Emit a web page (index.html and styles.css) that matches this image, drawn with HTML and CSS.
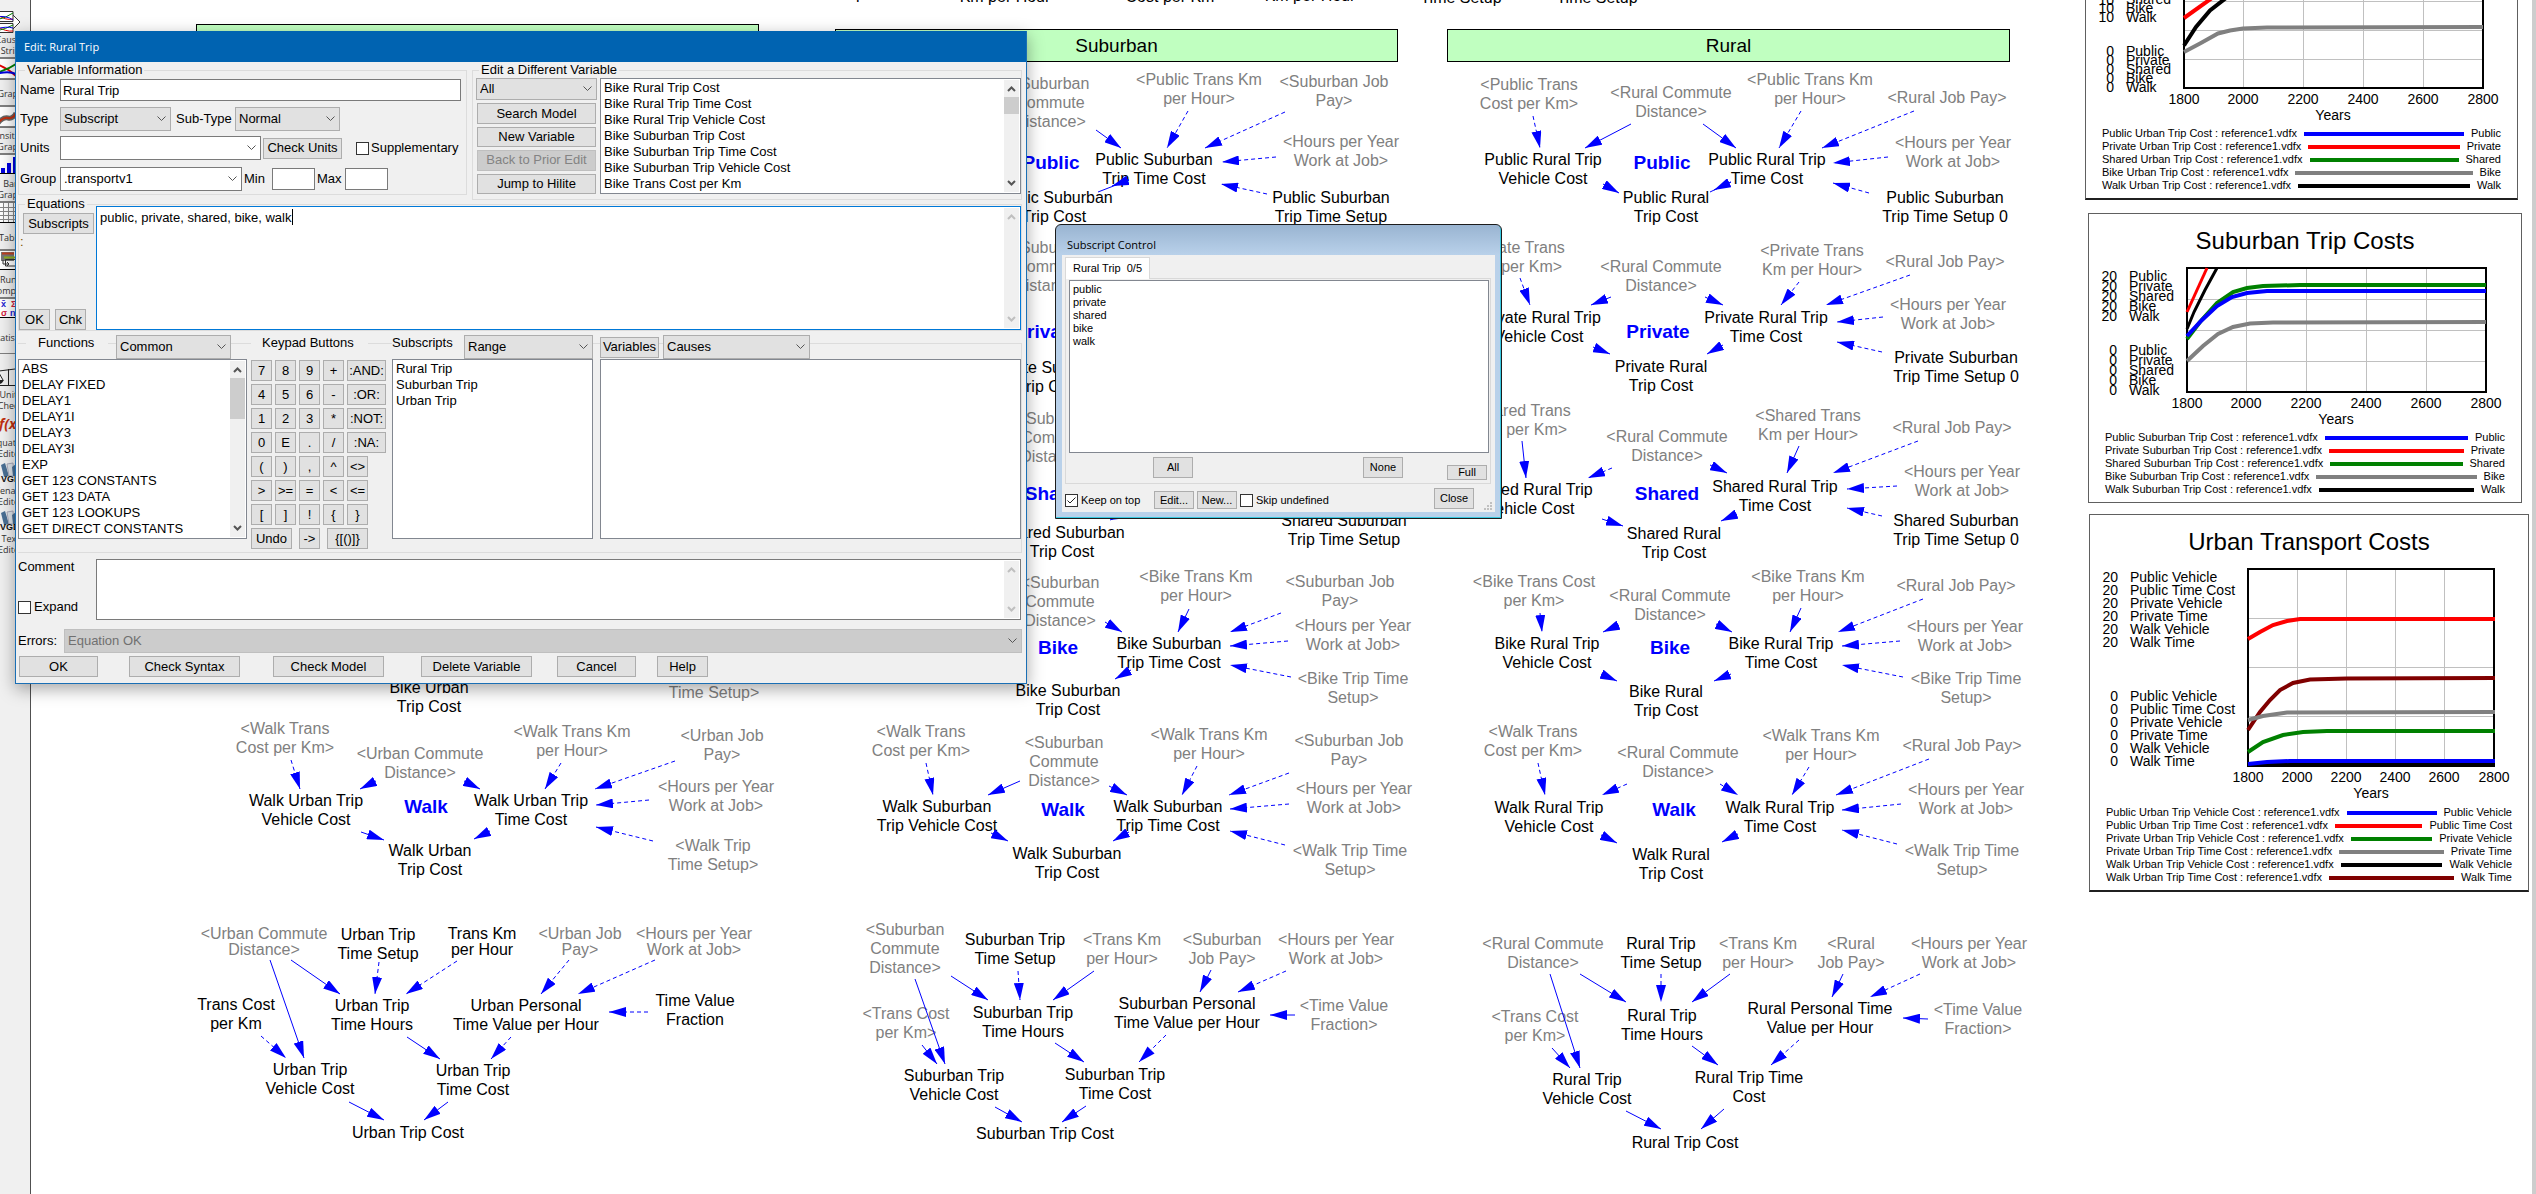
FILE: index.html
```html
<!DOCTYPE html>
<html lang="en">
<head>
<meta charset="utf-8">
<title>Transport model</title>
<link rel="stylesheet" href="styles.css">
</head>
<body>
<div class="workspace">

<nav class="toolbar" aria-label="Analysis tools">
  <button class="tool"><svg viewBox="-9 0 40 22"><path d="M-9 .5H13V10.5H-9M-9 12.5H13V21.5H-9M13 4L20 11L13 18" fill="#fff" stroke="#333"/><path d="M-4 3Q6 10 13 8M-4 15Q6 21 13 20" stroke="#e00000"/><path d="M-4 9Q6 7 13 2M-4 20Q6 18 13 14" stroke="#008000"/><path d="M-4 6Q6 4 13 9M-4 18Q6 15 13 17" stroke="#0000e0"/></svg><span>Causes<br>Strip</span></button>
  <button class="tool"><svg viewBox="-9 0 40 22"><path class="tile" d="M-9 0H31V20H-9z"/><path d="M-9 4Q4 6 16 17" stroke="#e00000" stroke-width="2"/><path d="M-9 15Q6 12 16 5" stroke="#008000" stroke-width="2"/><path d="M-9 16Q8 11 16 15" stroke="#0000e0" stroke-width="2"/><path d="M-9 20H31" stroke="#000"/></svg><span>Graph</span></button>
  <button class="tool"><svg viewBox="-9 0 40 22"><path class="tile" d="M-9 0H31V20H-9z"/><path d="M-2 16Q3 10 8 11T16 6" stroke="#666" stroke-width="5"/><path d="M-2 16Q3 10 8 11T16 6" stroke="#c03010" stroke-width="2"/><path d="M-9 20H31" stroke="#000"/></svg><span>Sensitivity<br>Graph</span></button>
  <button class="tool"><svg viewBox="-9 0 40 22"><path class="tile" d="M-9 0H31V18H-9z"/><path d="M1 13H5V18H1zM7 8H11V18H7zM13 2H17V18H13z" fill="#0000e0"/><path d="M-9 18.500H31" stroke="#000"/></svg><span>Bar<br>Graph</span></button>
  <button class="tool"><svg viewBox="-9 0 40 22"><path class="tile" d="M-9 0H31V19H-9z"/><path d="M-9 4.500H31M-9 8.500H31M-9 12.500H31M-9 16.500H31M3.500 0V19M8.500 0V19M13.500 0V19" stroke="#888"/><path d="M-9 19.500H31" stroke="#000"/></svg><span>Table</span></button>
  <button class="tool"><svg viewBox="-9 0 40 22"><path class="tile" d="M-9 0H31V18H-9z"/><path d="M1 1H14V10H1z" fill="#777"/><path d="M2 2.500H14" stroke="#c04020" stroke-width="2"/><path d="M4 6.500H16" stroke="#90b020" stroke-width="2"/><path d="M5.500 8.500H16V15H5.500zM3 9V13H9M7 11L9 13L7 15" stroke="#333"/><path d="M-9 18.500H31" stroke="#000"/></svg><span>Runs<br>Compare</span></button>
  <button class="tool tool-last"><svg viewBox="-9 0 40 22"><path class="tile" d="M-9 0H31V18H-9z"/><text x="1" y="8" fill="#2020d0">x̄</text><text x="11" y="8" fill="#d02040">Σ</text><text x="1" y="17" fill="#d02040">σ</text><text x="10" y="17" fill="#2020d0">n</text><path d="M-9 18.500H31" stroke="#000"/></svg><span>Statistics</span></button>
  <button class="tool tool-plain"><svg viewBox="-9 0 40 22"><path d="M-9 6L15 3M8.500 3V19M-3 7L-6 14M-1 7L3 14M-7 19.500H16" stroke="#222"/><path d="M-6 14H4Q2 18-1 18T-6 14" fill="#222"/></svg><span>Units<br>Check</span></button>
  <button class="tool tool-plain"><svg viewBox="-9 0 40 22"><text class="fx" x="-1" y="15">f(x)</text></svg><span>Equation<br>Editor</span></button>
  <button class="tool tool-plain"><svg viewBox="-9 0 40 22"><path d="M1 3L5 1L9 14L4 15z" fill="#4a6f94"/><path d="M7 2L13 1L14 14L9 14z" fill="#dde4ea" stroke="#aab"/><path d="M12 5L16 2V14H13z" fill="#4a6f94"/><text x="1" y="20" fill="#111">VGD</text></svg><span>Venapp<br>Editor</span></button>
  <button class="tool tool-plain"><svg viewBox="-9 0 40 22"><path d="M1 3L5 1L9 14L4 15z" fill="#4a6f94"/><path d="M7 2L13 1L14 14L9 14z" fill="#dde4ea" stroke="#aab"/><path d="M12 5L16 2V14H13z" fill="#4a6f94"/><text x="0" y="20" fill="#111">VGD</text></svg><span>Text<br>Editor</span></button>
</nav>

<main class="sketch">
<div class="banner" style="left:196px;top:24px"></div>
<div class="banner" style="left:835px;top:29px">Suburban</div>
<div class="banner" style="left:1447px;top:29px">Rural</div>

<!-- Shared inputs above the banners -->
<p class="node" style="left:863px;top:-16px">Cost per Km</p>
<p class="node" style="left:1005px;top:-13px">Km per Hour</p>
<p class="node" style="left:1170px;top:-13px">Cost per Km</p>
<p class="node" style="left:1310px;top:-14px">Km per Hour</p>
<p class="node" style="left:1461px;top:-12px">Time Setup</p>
<p class="node" style="left:1597px;top:-12px">Time Setup</p>

<!-- Urban -->
<p class="node" style="left:429px;top:678px">Bike Urban<br>Trip Cost</p>
<p class="node shadow" style="left:714px;top:683px">Time Setup&gt;</p>
<p class="node shadow" style="left:285px;top:719px">&lt;Walk Trans<br>Cost per Km&gt;</p>
<p class="node shadow" style="left:420px;top:744px">&lt;Urban Commute<br>Distance&gt;</p>
<p class="node shadow" style="left:572px;top:722px">&lt;Walk Trans Km<br>per Hour&gt;</p>
<p class="node shadow" style="left:722px;top:726px">&lt;Urban Job<br>Pay&gt;</p>
<p class="node shadow" style="left:716px;top:777px">&lt;Hours per Year<br>Work at Job&gt;</p>
<p class="node" style="left:306px;top:791px">Walk Urban Trip<br>Vehicle Cost</p>
<p class="node mode" style="left:426px;top:796px">Walk</p>
<p class="node" style="left:531px;top:791px">Walk Urban Trip<br>Time Cost</p>
<p class="node" style="left:430px;top:841px">Walk Urban<br>Trip Cost</p>
<p class="node shadow" style="left:713px;top:836px">&lt;Walk Trip<br>Time Setup&gt;</p>
<p class="node shadow tight" style="left:264px;top:926px">&lt;Urban Commute<br>Distance&gt;</p>
<p class="node" style="left:378px;top:925px">Urban Trip<br>Time Setup</p>
<p class="node tight" style="left:482px;top:926px">Trans Km<br>per Hour</p>
<p class="node shadow tight" style="left:580px;top:926px">&lt;Urban Job<br>Pay&gt;</p>
<p class="node shadow tight" style="left:694px;top:926px">&lt;Hours per Year<br>Work at Job&gt;</p>
<p class="node" style="left:236px;top:995px">Trans Cost<br>per Km</p>
<p class="node" style="left:372px;top:996px">Urban Trip<br>Time Hours</p>
<p class="node" style="left:526px;top:996px">Urban Personal<br>Time Value per Hour</p>
<p class="node" style="left:695px;top:991px">Time Value<br>Fraction</p>
<p class="node" style="left:310px;top:1060px">Urban Trip<br>Vehicle Cost</p>
<p class="node" style="left:473px;top:1061px">Urban Trip<br>Time Cost</p>
<p class="node" style="left:408px;top:1123px">Urban Trip Cost</p>

<!-- Suburban -->
<p class="node shadow" style="left:1050px;top:74px">&lt;Suburban<br>Commute<br>Distance&gt;</p>
<p class="node shadow" style="left:1199px;top:70px">&lt;Public Trans Km<br>per Hour&gt;</p>
<p class="node shadow" style="left:1334px;top:72px">&lt;Suburban Job<br>Pay&gt;</p>
<p class="node mode" style="left:1051px;top:152px">Public</p>
<p class="node" style="left:1154px;top:150px">Public Suburban<br>Trip Time Cost</p>
<p class="node shadow" style="left:1341px;top:132px">&lt;Hours per Year<br>Work at Job&gt;</p>
<p class="node" style="left:1054px;top:188px">Public Suburban<br>Trip Cost</p>
<p class="node" style="left:1331px;top:188px">Public Suburban<br>Trip Time Setup</p>
<p class="node shadow" style="left:1050px;top:238px">&lt;Suburban<br>Commute<br>Distance&gt;</p>
<p class="node mode" style="left:1046px;top:321px">Private</p>
<p class="node" style="left:1049px;top:358px">Private Suburban<br>Trip Cost</p>
<p class="node shadow" style="left:1056px;top:409px">&lt;Suburban<br>Commute<br>Distance&gt;</p>
<p class="node mode" style="left:1057px;top:483px">Shared</p>
<p class="node" style="left:1062px;top:523px">Shared Suburban<br>Trip Cost</p>
<p class="node" style="left:1344px;top:511px">Shared Suburban<br>Trip Time Setup</p>
<p class="node shadow" style="left:1060px;top:573px">&lt;Suburban<br>Commute<br>Distance&gt;</p>
<p class="node shadow" style="left:1196px;top:567px">&lt;Bike Trans Km<br>per Hour&gt;</p>
<p class="node shadow" style="left:1340px;top:572px">&lt;Suburban Job<br>Pay&gt;</p>
<p class="node shadow" style="left:1353px;top:616px">&lt;Hours per Year<br>Work at Job&gt;</p>
<p class="node mode" style="left:1058px;top:637px">Bike</p>
<p class="node" style="left:1169px;top:634px">Bike Suburban<br>Trip Time Cost</p>
<p class="node" style="left:1068px;top:681px">Bike Suburban<br>Trip Cost</p>
<p class="node shadow" style="left:1353px;top:669px">&lt;Bike Trip Time<br>Setup&gt;</p>
<p class="node shadow" style="left:921px;top:722px">&lt;Walk Trans<br>Cost per Km&gt;</p>
<p class="node shadow" style="left:1064px;top:733px">&lt;Suburban<br>Commute<br>Distance&gt;</p>
<p class="node shadow" style="left:1209px;top:725px">&lt;Walk Trans Km<br>per Hour&gt;</p>
<p class="node shadow" style="left:1349px;top:731px">&lt;Suburban Job<br>Pay&gt;</p>
<p class="node shadow" style="left:1354px;top:779px">&lt;Hours per Year<br>Work at Job&gt;</p>
<p class="node" style="left:937px;top:797px">Walk Suburban<br>Trip Vehicle Cost</p>
<p class="node mode" style="left:1063px;top:799px">Walk</p>
<p class="node" style="left:1168px;top:797px">Walk Suburban<br>Trip Time Cost</p>
<p class="node" style="left:1067px;top:844px">Walk Suburban<br>Trip Cost</p>
<p class="node shadow" style="left:1350px;top:841px">&lt;Walk Trip Time<br>Setup&gt;</p>
<p class="node shadow" style="left:905px;top:920px">&lt;Suburban<br>Commute<br>Distance&gt;</p>
<p class="node" style="left:1015px;top:930px">Suburban Trip<br>Time Setup</p>
<p class="node shadow" style="left:1122px;top:930px">&lt;Trans Km<br>per Hour&gt;</p>
<p class="node shadow" style="left:1222px;top:930px">&lt;Suburban<br>Job Pay&gt;</p>
<p class="node shadow" style="left:1336px;top:930px">&lt;Hours per Year<br>Work at Job&gt;</p>
<p class="node shadow" style="left:906px;top:1004px">&lt;Trans Cost<br>per Km&gt;</p>
<p class="node" style="left:1023px;top:1003px">Suburban Trip<br>Time Hours</p>
<p class="node" style="left:1187px;top:994px">Suburban Personal<br>Time Value per Hour</p>
<p class="node shadow" style="left:1344px;top:996px">&lt;Time Value<br>Fraction&gt;</p>
<p class="node" style="left:954px;top:1066px">Suburban Trip<br>Vehicle Cost</p>
<p class="node" style="left:1115px;top:1065px">Suburban Trip<br>Time Cost</p>
<p class="node" style="left:1045px;top:1124px">Suburban Trip Cost</p>

<!-- Rural -->
<p class="node shadow" style="left:1529px;top:75px">&lt;Public Trans<br>Cost per Km&gt;</p>
<p class="node shadow" style="left:1671px;top:83px">&lt;Rural Commute<br>Distance&gt;</p>
<p class="node shadow" style="left:1810px;top:70px">&lt;Public Trans Km<br>per Hour&gt;</p>
<p class="node shadow" style="left:1947px;top:88px">&lt;Rural Job Pay&gt;</p>
<p class="node shadow" style="left:1953px;top:133px">&lt;Hours per Year<br>Work at Job&gt;</p>
<p class="node" style="left:1543px;top:150px">Public Rural Trip<br>Vehicle Cost</p>
<p class="node mode" style="left:1662px;top:152px">Public</p>
<p class="node" style="left:1767px;top:150px">Public Rural Trip<br>Time Cost</p>
<p class="node" style="left:1666px;top:188px">Public Rural<br>Trip Cost</p>
<p class="node" style="left:1945px;top:188px">Public Suburban<br>Trip Time Setup 0</p>
<p class="node shadow" style="left:1513px;top:238px">&lt;Private Trans<br>Cost per Km&gt;</p>
<p class="node shadow" style="left:1661px;top:257px">&lt;Rural Commute<br>Distance&gt;</p>
<p class="node shadow" style="left:1812px;top:241px">&lt;Private Trans<br>Km per Hour&gt;</p>
<p class="node shadow" style="left:1945px;top:252px">&lt;Rural Job Pay&gt;</p>
<p class="node shadow" style="left:1948px;top:295px">&lt;Hours per Year<br>Work at Job&gt;</p>
<p class="node" style="left:1539px;top:308px">Private Rural Trip<br>Vehicle Cost</p>
<p class="node mode" style="left:1658px;top:321px">Private</p>
<p class="node" style="left:1766px;top:308px">Private Rural Trip<br>Time Cost</p>
<p class="node" style="left:1661px;top:357px">Private Rural<br>Trip Cost</p>
<p class="node" style="left:1956px;top:348px">Private Suburban<br>Trip Time Setup 0</p>
<p class="node shadow" style="left:1518px;top:401px">&lt;Shared Trans<br>Cost per Km&gt;</p>
<p class="node shadow" style="left:1667px;top:427px">&lt;Rural Commute<br>Distance&gt;</p>
<p class="node shadow" style="left:1808px;top:406px">&lt;Shared Trans<br>Km per Hour&gt;</p>
<p class="node shadow" style="left:1952px;top:418px">&lt;Rural Job Pay&gt;</p>
<p class="node shadow" style="left:1962px;top:462px">&lt;Hours per Year<br>Work at Job&gt;</p>
<p class="node" style="left:1530px;top:480px">Shared Rural Trip<br>Vehicle Cost</p>
<p class="node mode" style="left:1667px;top:483px">Shared</p>
<p class="node" style="left:1775px;top:477px">Shared Rural Trip<br>Time Cost</p>
<p class="node" style="left:1674px;top:524px">Shared Rural<br>Trip Cost</p>
<p class="node" style="left:1956px;top:511px">Shared Suburban<br>Trip Time Setup 0</p>
<p class="node shadow" style="left:1534px;top:572px">&lt;Bike Trans Cost<br>per Km&gt;</p>
<p class="node shadow" style="left:1670px;top:586px">&lt;Rural Commute<br>Distance&gt;</p>
<p class="node shadow" style="left:1808px;top:567px">&lt;Bike Trans Km<br>per Hour&gt;</p>
<p class="node shadow" style="left:1956px;top:576px">&lt;Rural Job Pay&gt;</p>
<p class="node shadow" style="left:1965px;top:617px">&lt;Hours per Year<br>Work at Job&gt;</p>
<p class="node" style="left:1547px;top:634px">Bike Rural Trip<br>Vehicle Cost</p>
<p class="node mode" style="left:1670px;top:637px">Bike</p>
<p class="node" style="left:1781px;top:634px">Bike Rural Trip<br>Time Cost</p>
<p class="node" style="left:1666px;top:682px">Bike Rural<br>Trip Cost</p>
<p class="node shadow" style="left:1966px;top:669px">&lt;Bike Trip Time<br>Setup&gt;</p>
<p class="node shadow" style="left:1533px;top:722px">&lt;Walk Trans<br>Cost per Km&gt;</p>
<p class="node shadow" style="left:1678px;top:743px">&lt;Rural Commute<br>Distance&gt;</p>
<p class="node shadow" style="left:1821px;top:726px">&lt;Walk Trans Km<br>per Hour&gt;</p>
<p class="node shadow" style="left:1962px;top:736px">&lt;Rural Job Pay&gt;</p>
<p class="node shadow" style="left:1966px;top:780px">&lt;Hours per Year<br>Work at Job&gt;</p>
<p class="node" style="left:1549px;top:798px">Walk Rural Trip<br>Vehicle Cost</p>
<p class="node mode" style="left:1674px;top:799px">Walk</p>
<p class="node" style="left:1780px;top:798px">Walk Rural Trip<br>Time Cost</p>
<p class="node" style="left:1671px;top:845px">Walk Rural<br>Trip Cost</p>
<p class="node shadow" style="left:1962px;top:841px">&lt;Walk Trip Time<br>Setup&gt;</p>
<p class="node shadow" style="left:1543px;top:934px">&lt;Rural Commute<br>Distance&gt;</p>
<p class="node" style="left:1661px;top:934px">Rural Trip<br>Time Setup</p>
<p class="node shadow" style="left:1758px;top:934px">&lt;Trans Km<br>per Hour&gt;</p>
<p class="node shadow" style="left:1851px;top:934px">&lt;Rural<br>Job Pay&gt;</p>
<p class="node shadow" style="left:1969px;top:934px">&lt;Hours per Year<br>Work at Job&gt;</p>
<p class="node shadow" style="left:1535px;top:1007px">&lt;Trans Cost<br>per Km&gt;</p>
<p class="node" style="left:1662px;top:1006px">Rural Trip<br>Time Hours</p>
<p class="node" style="left:1820px;top:999px">Rural Personal Time<br>Value per Hour</p>
<p class="node shadow" style="left:1978px;top:1000px">&lt;Time Value<br>Fraction&gt;</p>
<p class="node" style="left:1587px;top:1070px">Rural Trip<br>Vehicle Cost</p>
<p class="node" style="left:1749px;top:1068px">Rural Trip Time<br>Cost</p>
<p class="node" style="left:1685px;top:1133px">Rural Trip Cost</p>

<svg class="arrows" aria-hidden="true">
  <defs><marker id="head" markerUnits="userSpaceOnUse" markerWidth="18" markerHeight="10" refX="17" refY="5" orient="auto"><path d="M0 0L17 5L0 10z"/></marker></defs>
  <!-- solid links -->
  <g class="links">
    <path d="M376 781L360 789"/><path d="M464 781L480 789"/><path d="M361 832L384 840"/><path d="M490 831L474 839"/>
    <path d="M270 960L304 1058"/><path d="M291 960L340 994"/><path d="M407 1037L440 1059"/><path d="M349 1102L384 1120"/><path d="M448 1102L424 1120"/>
    <path d="M1096 130L1121 148"/><path d="M1129 180L1112 186"/><path class="bare" d="M1129 180L1098 192"/><path d="M1129 512L1110 520"/>
    <path d="M1105 622L1122 632"/><path d="M1189 609L1178 632"/><path d="M1131 670L1115 679"/>
    <path d="M1020 781L988 795"/><path d="M1109 786L1127 795"/><path d="M991 833L1008 841"/><path d="M1129 832L1113 841"/>
    <path d="M915 979L945 1064"/><path d="M951 976L988 1000"/><path d="M1094 971L1053 1000"/><path d="M1211 970L1200 992"/><path d="M1295 1015L1270 1015"/><path d="M922 1045L937 1064"/><path d="M1055 1043L1084 1062"/><path d="M995 1107L1022 1122"/><path d="M1086 1106L1062 1122"/>
    <path d="M1631 124L1585 148"/><path d="M1703 124L1736 148"/><path d="M1603 184L1619 193"/><path d="M1731 182L1714 190"/><path class="bare" d="M1731 182L1710 192"/>
    <path d="M1611 297L1591 305"/><path d="M1705 297L1723 305"/><path d="M1593 347L1610 354"/><path d="M1723 345L1707 354"/>
    <path d="M1522 441L1526 478"/><path d="M1710 465L1727 473"/><path d="M1799 446L1787 473"/><path d="M1602 519L1623 526"/><path d="M1737 514L1721 521"/>
    <path d="M1619 625L1603 632"/><path d="M1716 624L1732 632"/><path d="M1801 608L1790 632"/><path d="M1601 674L1617 681"/><path d="M1731 674L1714 681"/>
    <path d="M1601 835L1617 843"/><path d="M1738 834L1722 842"/>
    <path d="M1550 974L1580 1068"/><path d="M1580 974L1626 1002"/><path d="M1730 974L1692 1002"/><path d="M1843 974L1832 997"/><path d="M1928 1019L1903 1018"/><path d="M1552 1048L1570 1068"/><path d="M1692 1046L1718 1065"/><path d="M1626 1111L1661 1129"/><path d="M1724 1109L1701 1129"/>
  </g>
  <!-- dashed links -->
  <g class="links dashed">
    <path d="M291 760L300 789"/><path d="M561 763L545 789"/><path d="M675 761L595 789"/><path d="M649 800L596 805"/><path d="M653 841L596 827"/>
    <path d="M379 962L375 994"/><path d="M457 961L406 994"/><path d="M569 960L541 994"/><path d="M655 960L578 994"/><path d="M648 1012L609 1012"/><path d="M261 1036L286 1058"/><path d="M511 1037L491 1059"/>
    <path d="M1188 111L1167 148"/><path d="M1285 112L1205 148"/><path d="M1276 157L1222 162"/><path d="M1267 194L1221 184"/>
    <path d="M1281 613L1230 632"/><path d="M1288 641L1230 646"/><path d="M1291 677L1230 665"/>
    <path d="M926 763L933 795"/><path d="M1197 766L1182 795"/><path d="M1289 773L1229 795"/><path d="M1289 804L1230 809"/><path d="M1285 845L1230 831"/>
    <path d="M1018 971L1020 1000"/><path d="M1286 971L1238 992"/><path d="M1166 1035L1139 1062"/>
    <path d="M1533 116L1540 148"/><path d="M1801 111L1779 148"/><path d="M1914 111L1822 148"/><path d="M1888 157L1833 163"/><path d="M1869 193L1833 183"/>
    <path d="M1520 278L1530 305"/><path d="M1799 282L1781 305"/><path d="M1910 275L1826 305"/><path d="M1883 317L1837 322"/><path d="M1882 352L1837 342"/>
    <path d="M1612 468L1588 478"/><path d="M1918 441L1833 473"/><path d="M1897 486L1847 489"/><path d="M1882 516L1847 508"/>
    <path d="M1540 613L1542 632"/><path d="M1923 599L1838 632"/><path d="M1900 641L1842 646"/><path d="M1903 677L1842 665"/>
    <path d="M1538 763L1545 795"/><path d="M1627 784L1602 795"/><path d="M1720 784L1738 795"/><path d="M1809 767L1792 795"/><path d="M1929 759L1836 795"/><path d="M1901 804L1842 810"/><path d="M1897 844L1842 830"/>
    <path d="M1661 974L1661 1002"/><path d="M1920 974L1870 997"/><path d="M1799 1040L1771 1065"/>
  </g>
</svg>

<figure class="chart chart-urban">
  <svg viewBox="2086 0 431 127" role="img" aria-label="Urban trip costs">
    <path class="grid" d="M2184 1.500H2483M2184 30.500H2483M2184 59.500H2483M2243.500 0V88M2303.500 0V88M2363.500 0V88M2423.500 0V88"/>
    <path class="frame" d="M2184 -9V88H2483V-9"/>
    <path class="gray" d="M2184 52L2200 43.500L2218 33.500L2230 30.500L2243 28.500L2267 27.500L2483 27"/>
    <path class="black" d="M2184 45.500L2196 27L2210 10.500L2226 -2"/>
    <path class="red" d="M2184 18L2212 -2"/>
    <g class="num"><text x="2114" y="5">10</text><text x="2114" y="13">10</text><text x="2114" y="22">10</text><text x="2114" y="56">0</text><text x="2114" y="65">0</text><text x="2114" y="74">0</text><text x="2114" y="83">0</text><text x="2114" y="92">0</text></g>
    <g><text x="2126" y="4">Shared</text><text x="2126" y="13">Bike</text><text x="2126" y="22">Walk</text><text x="2126" y="56">Public</text><text x="2126" y="65">Private</text><text x="2126" y="74">Shared</text><text x="2126" y="83">Bike</text><text x="2126" y="92">Walk</text></g>
    <g class="axis"><text x="2184" y="104">1800</text><text x="2243" y="104">2000</text><text x="2303" y="104">2200</text><text x="2363" y="104">2400</text><text x="2423" y="104">2600</text><text x="2483" y="104">2800</text><text x="2333" y="120">Years</text></g>
  </svg>
  <ul class="legend">
    <li><span>Public Urban Trip Cost : reference1.vdfx</span><i class="bg-blue"></i><span>Public</span></li>
    <li><span>Private Urban Trip Cost : reference1.vdfx</span><i class="bg-red"></i><span>Private</span></li>
    <li><span>Shared Urban Trip Cost : reference1.vdfx</span><i class="bg-green"></i><span>Shared</span></li>
    <li><span>Bike Urban Trip Cost : reference1.vdfx</span><i class="bg-gray"></i><span>Bike</span></li>
    <li><span>Walk Urban Trip Cost : reference1.vdfx</span><i class="bg-black"></i><span>Walk</span></li>
  </ul>
</figure>

<figure class="chart chart-suburban">
  <figcaption>Suburban Trip Costs</figcaption>
  <svg viewBox="2089 258 432 173" role="img" aria-label="Suburban trip costs">
    <path class="grid" d="M2187 299.500H2486M2187 330.500H2486M2187 361.500H2486M2246.500 268V392M2306.500 268V392M2366.500 268V392M2426.500 268V392"/>
    <path class="frame" d="M2187 268H2486V392H2187z"/>
    <path class="gray" d="M2187 361L2203 346L2218 334L2233 327L2250 323.500L2273 322.500L2486 322"/>
    <path class="black thin" d="M2187 329L2194 312L2205 290L2217 268"/>
    <path class="green" d="M2187 339L2200 322L2217 303L2233 292L2247 288L2263 286L2300 285L2486 285"/>
    <path class="blue" d="M2187 336L2202 320L2217 306L2232 297L2247 293L2267 291L2486 291"/>
    <path class="red thin" d="M2187 312L2207 268"/>
    <g class="num"><text x="2117" y="281">20</text><text x="2117" y="291">20</text><text x="2117" y="301">20</text><text x="2117" y="311">20</text><text x="2117" y="321">20</text><text x="2117" y="355">0</text><text x="2117" y="365">0</text><text x="2117" y="375">0</text><text x="2117" y="385">0</text><text x="2117" y="395">0</text></g>
    <g><text x="2129" y="281">Public</text><text x="2129" y="291">Private</text><text x="2129" y="301">Shared</text><text x="2129" y="311">Bike</text><text x="2129" y="321">Walk</text><text x="2129" y="355">Public</text><text x="2129" y="365">Private</text><text x="2129" y="375">Shared</text><text x="2129" y="385">Bike</text><text x="2129" y="395">Walk</text></g>
    <g class="axis"><text x="2187" y="408">1800</text><text x="2246" y="408">2000</text><text x="2306" y="408">2200</text><text x="2366" y="408">2400</text><text x="2426" y="408">2600</text><text x="2486" y="408">2800</text><text x="2336" y="424">Years</text></g>
  </svg>
  <ul class="legend">
    <li><span>Public Suburban Trip Cost : reference1.vdfx</span><i class="bg-blue"></i><span>Public</span></li>
    <li><span>Private Suburban Trip Cost : reference1.vdfx</span><i class="bg-red"></i><span>Private</span></li>
    <li><span>Shared Suburban Trip Cost : reference1.vdfx</span><i class="bg-green"></i><span>Shared</span></li>
    <li><span>Bike Suburban Trip Cost : reference1.vdfx</span><i class="bg-gray"></i><span>Bike</span></li>
    <li><span>Walk Suburban Trip Cost : reference1.vdfx</span><i class="bg-black"></i><span>Walk</span></li>
  </ul>
</figure>

<figure class="chart chart-transport">
  <figcaption>Urban Transport Costs</figcaption>
  <svg viewBox="2090 559 438 247" role="img" aria-label="Urban transport costs">
    <path class="grid" d="M2248 618.500H2494M2248 667.500H2494M2248 716.500H2494M2297.500 569V766M2346.500 569V766M2395.500 569V766M2444.500 569V766"/>
    <path class="frame" d="M2248 569H2494V766H2248z"/>
    <path class="black" d="M2248 765H2495"/>
    <path class="maroon" d="M2248 730L2260 712L2270 700L2280 690L2293 683L2310 679.500L2347 678.500L2495 678"/>
    <path class="gray" d="M2248 720L2263 716L2287 712.500L2495 712"/>
    <path class="green" d="M2248 752L2263 742L2283 735L2303 732L2327 731L2495 731"/>
    <path class="red" d="M2248 639L2260 632L2273 625L2287 621L2300 619L2495 619"/>
    <path class="blue" d="M2248 764L2267 762L2290 761L2495 761"/>
    <g class="num"><text x="2118" y="582">20</text><text x="2118" y="595">20</text><text x="2118" y="608">20</text><text x="2118" y="621">20</text><text x="2118" y="634">20</text><text x="2118" y="647">20</text><text x="2118" y="701">0</text><text x="2118" y="714">0</text><text x="2118" y="727">0</text><text x="2118" y="740">0</text><text x="2118" y="753">0</text><text x="2118" y="766">0</text></g>
    <g><text x="2130" y="582">Public Vehicle</text><text x="2130" y="595">Public Time Cost</text><text x="2130" y="608">Private Vehicle</text><text x="2130" y="621">Private Time</text><text x="2130" y="634">Walk Vehicle</text><text x="2130" y="647">Walk Time</text><text x="2130" y="701">Public Vehicle</text><text x="2130" y="714">Public Time Cost</text><text x="2130" y="727">Private Vehicle</text><text x="2130" y="740">Private Time</text><text x="2130" y="753">Walk Vehicle</text><text x="2130" y="766">Walk Time</text></g>
    <g class="axis"><text x="2248" y="782">1800</text><text x="2297" y="782">2000</text><text x="2346" y="782">2200</text><text x="2395" y="782">2400</text><text x="2444" y="782">2600</text><text x="2494" y="782">2800</text><text x="2371" y="798">Years</text></g>
  </svg>
  <ul class="legend">
    <li><span>Public Urban Trip Vehicle Cost : reference1.vdfx</span><i class="bg-blue"></i><span>Public Vehicle</span></li>
    <li><span>Public Urban Trip Time Cost : reference1.vdfx</span><i class="bg-red"></i><span>Public Time Cost</span></li>
    <li><span>Private Urban Trip Vehicle Cost : reference1.vdfx</span><i class="bg-green"></i><span>Private Vehicle</span></li>
    <li><span>Private Urban Trip Time Cost : reference1.vdfx</span><i class="bg-gray"></i><span>Private Time</span></li>
    <li><span>Walk Urban Trip Vehicle Cost : reference1.vdfx</span><i class="bg-black"></i><span>Walk Vehicle</span></li>
    <li><span>Walk Urban Trip Time Cost : reference1.vdfx</span><i class="bg-maroon"></i><span>Walk Time</span></li>
  </ul>
</figure>
</main>
<div class="edge"></div>

<form class="window editor" aria-label="Edit: Rural Trip">
  <h1 class="editor-title">Edit: Rural Trip</h1>
  <div class="editor-body">
    <div class="editor-top">
      <fieldset class="group info">
        <legend>Variable Information</legend>
        <div class="row"><label class="lead" for="name">Name</label><input id="name" class="grow" type="text" value="Rural Trip"></div>
        <div class="row"><label class="lead" for="type">Type</label><select id="type" class="w-type"><option>Subscript</option></select><label class="mid" for="subtype">Sub-Type</label><select id="subtype" class="w-subtype"><option>Normal</option></select></div>
        <div class="row"><label class="lead" for="units">Units</label><select id="units" class="combo w-units"><option></option></select><button type="button" class="w-check">Check Units</button><input id="supp" type="checkbox"><label for="supp">Supplementary</label></div>
        <div class="row row-last"><label class="lead" for="group">Group</label><select id="group" class="combo w-group"><option>.transportv1</option></select><label class="bound" for="min">Min</label><input id="min" class="w-num" type="text"><label class="bound" for="max">Max</label><input id="max" class="w-num" type="text"></div>
      </fieldset>
      <fieldset class="group other">
        <legend>Edit a Different Variable</legend>
        <div class="other-actions">
          <select aria-label="Variable filter"><option>All</option></select>
          <button type="button">Search Model</button>
          <button type="button">New Variable</button>
          <button type="button" disabled>Back to Prior Edit</button>
          <button type="button">Jump to Hilite</button>
        </div>
        <div class="listbox">
          <ul role="listbox" aria-label="Variables in model">
            <li>Bike Rural Trip Cost</li><li>Bike Rural Trip Time Cost</li><li>Bike Rural Trip Vehicle Cost</li><li>Bike Suburban Trip Cost</li><li>Bike Suburban Trip Time Cost</li><li>Bike Suburban Trip Vehicle Cost</li><li>Bike Trans Cost per Km</li>
          </ul>
          <div class="scroll"><svg viewBox="0 0 15 17"><path d="M4 11L7.500 7.500L11 11"/></svg><i class="thumb"></i><svg class="end" viewBox="0 0 15 17"><path d="M4 6L7.500 9.500L11 6"/></svg></div>
        </div>
      </fieldset>
    </div>

    <fieldset class="group equations">
      <legend>Equations</legend>
      <div class="eq-side">
        <button type="button" class="w-subs">Subscripts</button>
        <span class="colon">:</span>
        <div class="eq-buttons"><button type="button">OK</button><button type="button">Chk</button></div>
      </div>
      <div class="textbox focus">
        <textarea aria-label="Equation">public, private, shared, bike, walk</textarea><i class="caret"></i>
        <div class="scroll idle"><svg viewBox="0 0 15 17"><path d="M4 11L7.500 7.500L11 11"/></svg><svg class="end" viewBox="0 0 15 17"><path d="M4 6L7.500 9.500L11 6"/></svg></div>
      </div>
    </fieldset>

    <section class="palette">
      <div class="col">
        <div class="col-head"><label class="cut cut-fn" for="fn">Functions</label><select id="fn" class="w-fn"><option>Common</option></select></div>
        <div class="listbox">
          <ul role="listbox" aria-label="Functions">
            <li>ABS</li><li>DELAY FIXED</li><li>DELAY1</li><li>DELAY1I</li><li>DELAY3</li><li>DELAY3I</li><li>EXP</li><li>GET 123 CONSTANTS</li><li>GET 123 DATA</li><li>GET 123 LOOKUPS</li><li>GET DIRECT CONSTANTS</li>
          </ul>
          <div class="scroll"><svg viewBox="0 0 15 17"><path d="M4 11L7.500 7.500L11 11"/></svg><i class="thumb tall"></i><svg class="end" viewBox="0 0 15 17"><path d="M4 6L7.500 9.500L11 6"/></svg></div>
        </div>
      </div>
      <div class="col">
        <div class="col-head"><span class="cut cut-keys">Keypad Buttons</span></div>
        <div class="keys">
          <button type="button">7</button><button type="button">8</button><button type="button">9</button><button type="button">+</button><button type="button" class="wide">:AND:</button>
          <button type="button">4</button><button type="button">5</button><button type="button">6</button><button type="button">-</button><button type="button" class="wide">:OR:</button>
          <button type="button">1</button><button type="button">2</button><button type="button">3</button><button type="button">*</button><button type="button" class="wide">:NOT:</button>
          <button type="button">0</button><button type="button">E</button><button type="button">.</button><button type="button">/</button><button type="button" class="wide">:NA:</button>
          <button type="button">(</button><button type="button">)</button><button type="button">,</button><button type="button">^</button><button type="button">&lt;&gt;</button>
          <button type="button">&gt;</button><button type="button">&gt;=</button><button type="button">=</button><button type="button">&lt;</button><button type="button">&lt;=</button>
          <button type="button">[</button><button type="button">]</button><button type="button">!</button><button type="button">{</button><button type="button">}</button>
        </div>
        <div class="keys-last"><button type="button" class="dbl">Undo</button><button type="button">-&gt;</button><button type="button" class="dbl">{[()]}</button></div>
      </div>
      <div class="col">
        <div class="col-head"><label class="cut cut-subs" for="subs">Subscripts</label><select id="subs" class="grow"><option>Range</option></select></div>
        <div class="listbox"><ul role="listbox" aria-label="Subscripts"><li>Rural Trip</li><li>Suburban Trip</li><li>Urban Trip</li></ul></div>
      </div>
      <div class="col col-vars">
        <div class="col-head"><button type="button" class="w-vars">Variables</button><select aria-label="Variable relation" class="w-causes"><option>Causes</option></select></div>
        <div class="listbox"><ul role="listbox" aria-label="Variables"></ul></div>
      </div>
    </section>

    <div class="comment">
      <div class="comment-side"><label for="comment">Comment</label><div class="tick"><input id="expand" type="checkbox"><label for="expand">Expand</label></div></div>
      <div class="textbox">
        <textarea id="comment"></textarea>
        <div class="scroll idle"><svg viewBox="0 0 15 17"><path d="M4 11L7.500 7.500L11 11"/></svg><svg class="end" viewBox="0 0 15 17"><path d="M4 6L7.500 9.500L11 6"/></svg></div>
      </div>
    </div>
    <div class="errors"><label for="errors">Errors:</label><select id="errors" disabled><option>Equation OK</option></select></div>
    <div class="commands"><button type="button" class="w-m">OK</button><button type="button" class="w-l">Check Syntax</button><button type="button" class="w-l">Check Model</button><button type="button" class="w-l">Delete Variable</button><button type="button" class="w-m">Cancel</button><button type="button" class="w-s">Help</button></div>
  </div>
</form>

<form class="window subscripts" aria-label="Subscript Control">
  <h2>Subscript Control</h2>
  <div class="client">
    <button type="button" class="tab">Rural Trip&nbsp; 0/5</button>
    <div class="panel">
      <ul role="listbox" aria-label="Rural Trip"><li>public</li><li>private</li><li>shared</li><li>bike</li><li>walk</li></ul>
      <div class="pick"><button type="button">All</button><button type="button">None</button><button type="button" class="full">Full</button></div>
    </div>
    <div class="footer">
      <div class="footer-left"><input id="keep" type="checkbox" checked><label class="keep-label" for="keep">Keep on top</label><button type="button">Edit...</button><button type="button">New...</button><input id="skip" type="checkbox"><label for="skip">Skip undefined</label></div>
      <button type="button" class="close">Close</button>
      <svg class="grip" viewBox="0 0 9 9"><path d="M6 0h2v2h-2zM3 3h2v2h-2zM6 3h2v2h-2zM0 6h2v2h-2zM3 6h2v2h-2zM6 6h2v2h-2z"/></svg>
    </div>
  </div>
</form>
</div>
</body>
</html>
```
FILE: styles.css
```css
* { box-sizing: border-box; }
body {
  margin: 0;
  background: #fff;
  color: #000;
  font-family: "Liberation Sans", Arial, sans-serif;
  font-size: 13px;
  line-height: 16px;
}
button, input, select, textarea { font: inherit; color: inherit; margin: 0; }
p, ul, h1, h2, figure { margin: 0; padding: 0; }
ul { list-style: none; }

.workspace {
  display: grid;
  grid-template-columns: 31px 1fr 4px;
  grid-template-rows: 1fr;
  min-height: 100vh;
  position: relative;
  overflow: hidden;
}
.sketch { grid-column: 1 / -1; grid-row: 1; position: relative; overflow: hidden; }
.edge { grid-column: 3; grid-row: 1; background: #cdcdcd; position: relative; }

/* Tool strip */
.toolbar {
  grid-column: 1;
  grid-row: 1;
  z-index: 1;
  display: flex;
  flex-direction: column;
  align-items: center;
  padding: 9px 9px 0 0;
  background: #f0f0f0;
  border-right: 1px solid #505050;
  overflow: hidden;
}
.tool {
  width: 46px;
  height: 48px;
  flex: none;
  display: flex;
  flex-direction: column;
  align-items: center;
  justify-content: space-between;
  padding: 0;
  border: 0;
  border-top: 2px solid #808080;
  background: none;
  font: 9px/11px "Open Sans", sans-serif;
  color: #333;
  white-space: nowrap;
}
.tool:first-child, .tool-plain { border-top-color: transparent; }
.tool span { flex: 1; display: flex; align-items: center; }
.tool svg { width: 40px; height: 22px; fill: none; flex: none; }
.tool .tile { fill: #fff; }
.tool text { font: bold 9px "Liberation Sans", sans-serif; }
.tool .fx { font: italic bold 14px "Open Sans", sans-serif; fill: #c03010; }
.tool-last { height: 57px; border-bottom: 1px solid #808080; margin-bottom: 10px; }

/* Model sketch */
.banner {
  position: absolute;
  width: 563px;
  height: 33px;
  background: #c0ffc0;
  border: 1px solid #000;
  font-size: 19px;
  line-height: 31px;
  text-align: center;
}
.node {
  position: absolute;
  width: 200px;
  margin-left: -100px;
  font-size: 16px;
  line-height: 19px;
  text-align: center;
}
.shadow { color: #808080; }
.tight { line-height: 16px; }
.mode { font-size: 19px; line-height: 22px; font-weight: bold; color: #0000ff; }
.arrows { position: absolute; inset: 0; width: 100%; height: 100%; fill: #0000ff; }
.links path { stroke: #0000ff; marker-end: url(#head); }
.links .bare { marker-end: none; }
.dashed path { stroke-dasharray: 4 3; }

/* Charts */
.chart { position: absolute; background: #fff; border: 1px solid #606060; padding-bottom: 6px; }
.chart-urban { left: 2085px; top: 0; width: 433px; border-top: 0; border-bottom: 2px solid #202020; }
.chart-suburban { left: 2088px; top: 213px; width: 434px; }
.chart-transport { left: 2089px; top: 514px; width: 440px; border-bottom: 2px solid #202020; }
.chart figcaption { padding-top: 10px; font-size: 24px; line-height: 34px; text-align: center; }
.chart svg { display: block; width: 100%; font-size: 14px; }
.chart path { fill: none; stroke-width: 4; }
.chart .grid { stroke: #c0c0c0; stroke-width: 1; }
.chart .frame { stroke: #000; stroke-width: 2; }
.chart .thin { stroke-width: 3; }
.num { text-anchor: end; }
.axis { text-anchor: middle; }
.red { stroke: #ff0000; }
.blue { stroke: #0000ff; }
.green { stroke: #008000; }
.gray { stroke: #808080; }
.black { stroke: #000; }
.maroon { stroke: #800000; }
.legend { padding: 0 16px; font-size: 11px; line-height: 13px; }
.legend li { display: flex; align-items: center; gap: 7px; white-space: nowrap; }
.legend i { flex: 1; height: 4px; }
.bg-red { background: #ff0000; }
.bg-blue { background: #0000ff; }
.bg-green { background: #008000; }
.bg-gray { background: #808080; }
.bg-black { background: #000; }
.bg-maroon { background: #800000; }

/* Shared controls */
.window { position: absolute; z-index: 2; }
.window button {
  height: 21px;
  padding: 0;
  background: #e1e1e1;
  border: 1px solid #adadad;
  text-align: center;
  white-space: nowrap;
}
.window button:disabled { background: #ccc; border-color: #bfbfbf; color: #838383; }
.window select {
  appearance: none;
  height: 24px;
  padding: 0 20px 0 3px;
  border: 1px solid #adadad;
  border-radius: 0;
  background: #e1e1e1 url("data:image/svg+xml,%3Csvg xmlns='http://www.w3.org/2000/svg' width='9' height='6'%3E%3Cpath d='M.5 .5L4.500 4.500L8.500 .5' fill='none' stroke='%23555'/%3E%3C/svg%3E") no-repeat right 4px center;
}
.window .combo { background-color: #fff; border-color: #7a7a7a; }
.window select:disabled { background-color: #ccc; border-color: #bfbfbf; color: #707070; opacity: 1; }
.window input[type="text"] { height: 22px; padding: 0 2px; border: 1px solid #7a7a7a; background: #fff; }
.window input[type="checkbox"] {
  appearance: none;
  flex: none;
  width: 13px;
  height: 13px;
  border: 1px solid #333;
  background: #fff;
}
.window input[type="checkbox"]:checked {
  background: #fff url("data:image/svg+xml,%3Csvg xmlns='http://www.w3.org/2000/svg' width='11' height='11'%3E%3Cpath d='M1.500 5.500L4 8L9.500 2.500' fill='none' stroke='%23222'/%3E%3C/svg%3E");
}
.grow { flex: 1; min-width: 0; }

.listbox { display: flex; border: 1px solid #828790; background: #fff; padding: 1px; }
.listbox ul { flex: 1; padding-left: 2px; white-space: nowrap; overflow: hidden; }
.scroll { width: 15px; display: flex; flex-direction: column; background: #f0f0f0; }
.scroll svg { width: 15px; height: 17px; fill: none; stroke: #555; stroke-width: 2; }
.scroll .end { margin-top: auto; }
.scroll .thumb { height: 17px; background: #cdcdcd; }
.scroll .tall { height: 41px; }
.idle svg { stroke: #bfbfbf; }
.textbox { position: relative; flex: 1; display: flex; border: 1px solid #7a7a7a; background: #fff; padding: 1px; }
.textbox textarea { flex: 1; border: 0; padding: 2px; resize: none; outline: 0; background: none; overflow: hidden; }
.focus { border-color: #0078d7; }
.caret { position: absolute; left: 195px; top: 2px; width: 1px; height: 16px; background: #000; }

/* Equation editor window */
.editor {
  left: 15px;
  top: 31px;
  width: 1012px;
  background: #f0f0f0;
  border: 1px solid #1a6fb5;
  border-top: 0;
  box-shadow: 0 5px 16px rgba(0, 0, 0, .35);
}
.editor-title {
  height: 31px;
  padding-left: 8px;
  background: #0063b1;
  color: #fff;
  font: 11px/31px "Open Sans", sans-serif;
}
.editor-body { padding: 8px 4px 6px 2px; }
.group { position: relative; min-width: 0; margin: 0; padding: 0; border: 1px solid #dcdcdc; }
.group legend { position: absolute; left: 6px; top: -9px; padding: 0 2px; background: #f0f0f0; }
.editor-top { display: flex; align-items: flex-start; gap: 5px; }
.info { flex: 0 0 449px; display: flex; flex-direction: column; gap: 5px; padding: 7px 5px 3px 1px; }
.row { display: flex; align-items: center; gap: 2px; min-height: 24px; white-space: nowrap; }
.row-last { margin-top: 2px; }
.lead { width: 38px; }
.w-type { width: 111px; }
.mid { width: 60px; padding-left: 3px; }
.w-subtype { width: 105px; }
.w-units { width: 201px; }
.window .w-check { width: 79px; margin-right: 12px; }
.w-group { width: 182px; }
.bound { width: 26px; }
.w-num { width: 43px; }

.other { flex: 1; display: flex; gap: 3px; height: 130px; padding: 7px 0 5px 3px; }
.other-actions { width: 121px; display: flex; flex-direction: column; gap: 3px; }
.other-actions button { margin: 0 1px; }
.other-actions select { height: 23px; }
.other .listbox { flex: 1; }

.equations { display: flex; gap: 2px; height: 127px; margin-top: 4px; padding: 1px 0 0; }
.eq-side { width: 75px; display: flex; flex-direction: column; }
.window .w-subs { align-self: flex-end; width: 71px; margin-top: 7px; }
.colon { padding-left: 1px; color: #805000; }
.eq-buttons { margin-top: auto; display: flex; gap: 5px; }
.eq-buttons button { width: 31px; }

.palette {
  display: grid;
  grid-template-columns: 229px 137px 201px 1fr;
  gap: 4px;
  height: 210px;
  margin-top: 12px;
  border: 1px solid #dcdcdc;
  border-left: 0;
}
.col { margin-top: -9px; }
.col-vars { padding-left: 3px; }
.col-head { display: flex; align-items: center; height: 24px; }
.col .listbox { height: 180px; }
.cut { background: #f0f0f0; height: 16px; margin-bottom: 8px; }
.cut-fn { width: 82px; margin-left: 8px; padding-left: 12px; margin-right: 8px; }
.cut-keys { width: 117px; padding-left: 11px; }
.cut-subs { width: 72px; }
.w-fn { width: 115px; }
.window .w-vars { width: 59px; margin-right: 4px; }
.w-causes { width: 147px; }
.keys { display: grid; grid-template-columns: repeat(4, 21px) 39px; gap: 3px; margin-top: 1px; }
.keys button { width: 21px; }
.keys .wide { width: 39px; }
.keys-last { display: flex; gap: 7px; margin-top: 3px; }
.keys-last button { width: 21px; }
.keys-last .dbl { width: 41px; }

.comment { display: flex; height: 61px; margin-top: 6px; padding-right: 1px; }
.comment-side { width: 78px; display: flex; flex-direction: column; justify-content: space-between; padding-bottom: 5px; }
.tick { display: flex; align-items: center; gap: 3px; }
.errors { display: flex; align-items: center; margin-top: 9px; }
.errors label { width: 46px; }
.errors select { flex: 1; }
.commands { display: grid; grid-template-columns: 110px 144px 148px 136px 100px 1fr; margin-top: 3px; padding-left: 1px; }
.w-s { width: 51px; }
.w-m { width: 79px; }
.w-l { width: 111px; }

/* Subscript control window */
.subscripts {
  left: 1055px;
  top: 224px;
  width: 447px;
  padding: 0 6px 6px;
  border: 1px solid #1c1c1c;
  border-radius: 6px 6px 0 0;
  background: linear-gradient(#99b4d1, #b9d1ea 30px);
  box-shadow: inset -1px -1px #38c8e0;
  font-size: 11px;
  line-height: 13px;
}
.subscripts h2 { height: 30px; padding: 4px 0 0 5px; font: 11px/31px "Open Sans", sans-serif; }
.client { height: 257px; padding: 2px 4px 0 3px; background: #f0f0f0; }
.window .tab {
  display: block;
  position: relative;
  width: 85px;
  height: 22px;
  margin-bottom: -1px;
  background: #fff;
  border-color: #d9d9d9;
  border-bottom: 0;
}
.panel { border: 1px solid #d9d9d9; padding: 1px 1px 2px 3px; height: 206px; }
.panel ul { height: 173px; padding: 2px 3px; background: #fff; border: 1px solid #828790; }
.pick { display: grid; grid-template-columns: 84px 210px 84px 1fr; padding-top: 4px; }
.pick button { width: 40px; }
.pick button:first-child { grid-column: 2; }
.window .full { height: 15px; line-height: 13px; margin-top: 8px; }
.footer { display: flex; gap: 10px; padding-top: 4px; }
.footer-left { flex: 1; display: flex; align-items: center; gap: 3px; height: 24px; }
.footer-left button { width: 40px; height: 18px; }
.keep-label { width: 70px; }
.close { width: 40px; }
.grip { width: 9px; height: 9px; margin-top: 14px; margin-right: -2px; fill: #c0c0c0; }
```
